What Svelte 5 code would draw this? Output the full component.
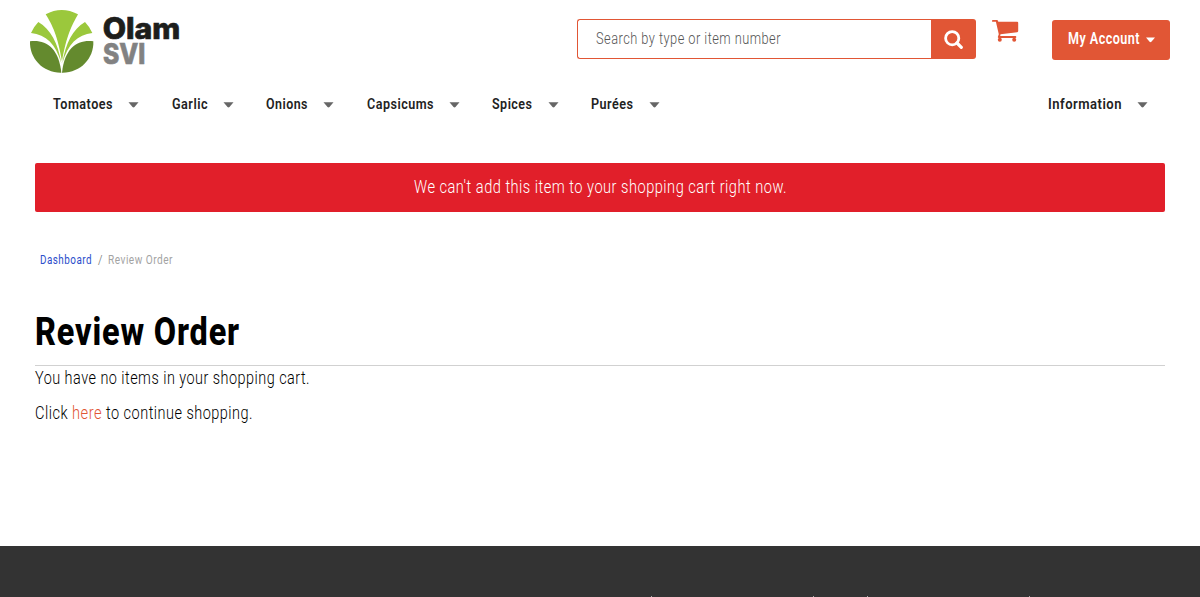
<script>
  const nav = [
    { name: 'Tomatoes', w: 60, gap: 32.5 },
    { name: 'Garlic', w: 36, gap: 32.5 },
    { name: 'Onions', w: 42, gap: 32.5 },
    { name: 'Capsicums', w: 67, gap: 32.5 },
    { name: 'Spices', w: 40.5, gap: 32.5 },
    { name: 'Purées', w: 42.5, gap: 0 }
  ];
</script>

{#snippet label(text, width, size, weight = 400, spacing = 0.6)}
  <svg class="label" {width} height={size * 1.25} role="img" aria-label={text}>
    <text x="0" y={size} font-size={size} font-weight={weight} letter-spacing={spacing} textLength={width} lengthAdjust="spacingAndGlyphs">{text}</text>
  </svg>
{/snippet}

{#snippet caret()}
  <svg class="caret" width="10" height="6" viewBox="0 0 10 6"><path d="M0 .3H10L6 5Q5 5.9 4 5Z" fill="currentColor" /></svg>
{/snippet}

<div class="page">
  <header>
    <svg class="logo" width="160" height="70" viewBox="0 15 480 210">
      <g fill="#9bc83c">
        <path d="M77 43Q125 17 174 43C155 78 140 105 126 184C113 108 97 75 77 43Z" />
        <path d="M55 66Q42 79 33 99C78 103 108 133 124 190C114 129 92 88 55 66Z" />
        <path d="M195 66Q208 79 217 99C173 103 143 133 127 190C137 129 158 88 195 66Z" />
      </g>
      <g fill="#648a2e">
        <path d="M30 124C77 118 116 143 124 218C69 219 28 176 30 124Z" />
        <path d="M220 124C173 118 134 143 126 218C181 219 222 176 220 124Z" />
      </g>
      <text class="brand" x="248" y="118" font-size="88" textLength="233" lengthAdjust="spacingAndGlyphs" fill="#1d1e1c" stroke="#1d1e1c">Olam</text>
      <text class="brand" x="249" y="193" font-size="84" textLength="127" lengthAdjust="spacingAndGlyphs" fill="#828282" stroke="#828282">SVI</text>
    </svg>
    <div class="search">
      <div class="field">{@render label('Search by type or item number', 185, 16, 350)}</div>
      <div class="go">
        <svg width="20" height="20" viewBox="0 0 20 20" fill="none" stroke="#fff"><circle cx="8.2" cy="9.2" r="6.6" stroke-width="2.8" /><path d="M13 14L17.3 18.3" stroke-width="3.2" stroke-linecap="round" /></svg>
      </div>
    </div>
    <svg class="cart" width="27" height="23" viewBox="0 0 27 23" fill="#e15635">
      <path d="M.8 0H5.1Q6 0 6.3 1.7H25.2Q26.2 1.7 26.2 2.7V11Q26.2 12 25.2 12.2L8.5 14.3L8.2 16.1H23.5Q24.3 16.1 24.3 17Q24.3 17.9 23.5 17.9H6.8Q5.6 17.9 5.9 16.7L6.8 14.2L3.9 1.8H.8Q0 1.7 0 .9Q0 0 .8 0Z" />
      <circle cx="7.8" cy="19.8" r="2" /><circle cx="22.2" cy="19.8" r="2" />
    </svg>
    <div class="account">{@render label('My Account', 72, 16, 600)}{@render caret()}</div>
  </header>

  <nav>
    {#each nav as item}
      <div class="item" style:margin-right="{item.gap}px">{@render label(item.name, item.w, 15.5, 600)}{@render caret()}</div>
    {/each}
    <div class="item info">{@render label('Information', 74, 15.5, 600)}{@render caret()}</div>
  </nav>

  <main>
    <div class="alert">{@render label("We can't add this item to your shopping cart right now.", 373, 18.4, 300)}</div>
    <div class="crumbs">
      <span class="blue">{@render label('Dashboard', 52, 12.4)}</span>
      <span class="slash">{@render label('/', 5, 12.4, 300)}</span>
      <span>{@render label('Review Order', 65, 12.4)}</span>
    </div>
    <h1>{@render label('Review Order', 205, 38.5, 850, 1)}</h1>
    <p>{@render label('You have no items in your shopping cart.', 275, 18.4, 350)}</p>
    <p class="more">{@render label('Click', 33, 18.4, 350)}<span class="link">{@render label('here', 30, 18.4, 350)}</span>{@render label('to continue shopping.', 147, 18.4, 350)}</p>
  </main>
  <footer><i></i><i></i><i></i><i></i></footer>
</div>

<style>
  :global(body) { background: #fff; overflow: hidden; }
  .page { width: 1200px; height: 597px; display: flex; flex-direction: column; font-family: Roboto, sans-serif; color: #000; overflow: hidden; }
  svg { display: block; flex: none; }
  .label { overflow: visible; fill: currentColor; }
  header { height: 82px; display: flex; align-items: flex-start; box-sizing: border-box; padding: 5px 30px 0 20px; }
  .brand { font-family: Inter, sans-serif; font-weight: 800; stroke-width: 2; }
  .search { display: flex; width: 399px; height: 40px; margin: 14px 0 0 397px; }
  .field { flex: 1; box-sizing: border-box; border: 1px solid #e15635; border-right: 0; border-radius: 3px 0 0 3px; padding: 8px 0 0 18px; color: #555; }
  .go { width: 45px; display: flex; align-items: center; justify-content: center; background: #e15635; border-radius: 0 3px 3px 0; }
  .cart { margin: 15px 0 0 15.5px; }
  .account { box-sizing: border-box; width: 118px; height: 40px; margin: 15px 0 0 auto; padding: 8px 0 0 16px; display: flex; background: #e15635; border-radius: 3px; color: #fff; }
  .account :global(.caret) { margin: 9px 0 0 6px; width: 9px; }
  nav { height: 81px; box-sizing: border-box; padding: 11px 52px 0 53px; display: flex; }
  .item { display: flex; color: #222; }
  .item :global(.caret) { color: #666; margin: 9px 0 0 15px; width: 11px; height: 6px; }
  .info { margin-left: auto; }
  main { padding: 0 35px; height: 383px; box-sizing: border-box; }
  .alert { height: 49px; box-sizing: border-box; padding-top: 12px; background: #e11f2a; color: #fff; border-radius: 2px; display: flex; justify-content: center; }
  .crumbs { display: flex; padding: 40px 0 0 5px; height: 15px; color: #a3a3a3; }
  .blue { color: #2c4ecb; }
  .slash { margin: 0 5px 0 6px; color: #666; }
  h1 { margin: 39px 0 0; height: 60px; box-sizing: border-box; border-bottom: 1px solid #d1d1d1; }
  p { margin: 0; height: 35px; display: flex; color: #000; }
  .more { gap: 4px; }
  .link { color: #e15635; }
  footer { height: 51px; background: #333; display: flex; align-items: flex-end; padding-left: 651px; }
  i { width: 1px; height: 1px; background: #aaa; margin-right: 161px; }
  i:nth-child(2) { margin-right: 53px; }
</style>
